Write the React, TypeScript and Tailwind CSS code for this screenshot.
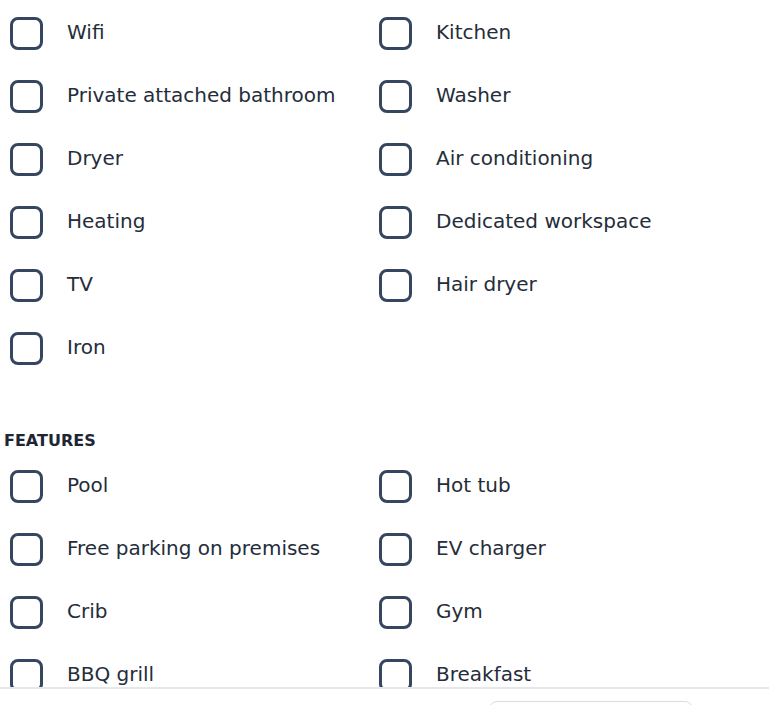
import { useState } from "react";

const amenities = [
  "Wifi",
  "Kitchen",
  "Private attached bathroom",
  "Washer",
  "Dryer",
  "Air conditioning",
  "Heating",
  "Dedicated workspace",
  "TV",
  "Hair dryer",
  "Iron",
];

const features = [
  "Pool",
  "Hot tub",
  "Free parking on premises",
  "EV charger",
  "Crib",
  "Gym",
  "BBQ grill",
  "Breakfast",
];

function CheckRow({ label }: { label: string }) {
  const [checked, setChecked] = useState(false);
  return (
    <label className="flex h-[63px] items-center cursor-pointer">
      <input
        type="checkbox"
        checked={checked}
        onChange={() => setChecked(!checked)}
        className="sr-only"
      />
      <span
        className={
          "ml-[10px] h-[33px] w-[33px] shrink-0 rounded-[8px] border-[3px] border-[#364660] " +
          (checked ? "bg-[#364660]" : "bg-white")
        }
      />
      <span className="ml-[24px] pb-[3px] text-[20px] leading-[26px] text-[#252d3a] whitespace-nowrap">
        {label}
      </span>
    </label>
  );
}

export default function App() {
  return (
    <div
      className="flex h-[705px] flex-col overflow-hidden bg-white"
      style={{ fontFamily: '"DejaVu Sans", "Noto Sans", sans-serif' }}
    >
      <div className="flex-1 overflow-hidden pt-[2px]">
        <div className="grid grid-cols-[369px_1fr]">
          {amenities.map((a) => (
            <CheckRow key={a} label={a} />
          ))}
        </div>
        <h4 className="mt-[51px] mb-[4px] pl-[4px] text-[16px] leading-[20px] font-bold text-[#1e2633]">
          FEATURES
        </h4>
        <div className="grid grid-cols-[369px_1fr]">
          {features.map((a) => (
            <CheckRow key={a} label={a} />
          ))}
        </div>
      </div>
      <footer className="flex h-[18px] shrink-0 justify-end border-t-2 border-[#e5e7eb] pr-[76px] pt-[12px]">
        <button
          type="button"
          className="h-[40px] w-[204px] rounded-[8px] border border-[#d9dce2] bg-white"
        />
      </footer>
    </div>
  );
}
